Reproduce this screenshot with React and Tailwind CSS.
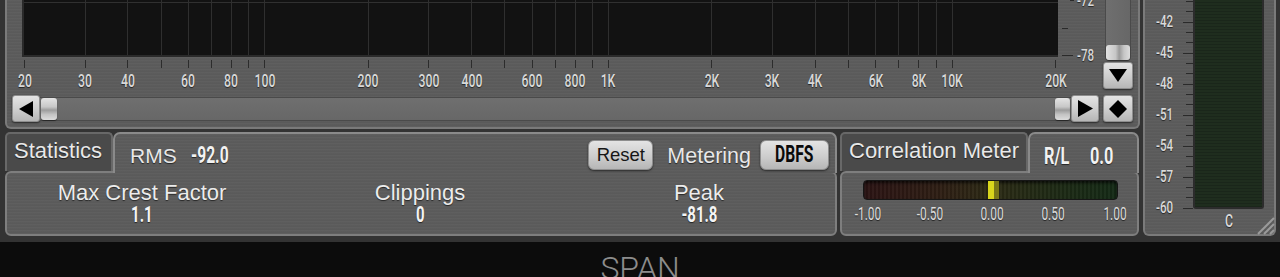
import React from "react";

// frequency axis: [Hz, label]
const FREQS = [
  [20, "20"], [30, "30"], [40, "40"], [50, null], [60, "60"], [70, null], [80, "80"], [90, null],
  [100, "100"], [200, "200"], [300, "300"], [400, "400"], [500, null], [600, "600"], [700, null],
  [800, "800"], [900, null], [1000, "1K"], [2000, "2K"], [3000, "3K"], [4000, "4K"], [5000, null],
  [6000, "6K"], [7000, null], [8000, "8K"], [9000, null], [10000, "10K"], [20000, "20K"],
];
const fx = (f) => 24 + (Math.log10(f / 20) / 3) * 1031;

const DB = ["-42", "-45", "-48", "-51", "-54", "-57", "-60"];

const COND = "inline-block whitespace-nowrap font-['Roboto',sans-serif] scale-x-[0.68]";
const SANS = "font-['Liberation_Sans',Arial,sans-serif]";
const SHADOW = "[text-shadow:0_1px_1px_rgba(0,0,0,0.6)]";
const METAL = "bg-[#5b5b5b] bg-[image:repeating-linear-gradient(180deg,rgba(255,255,255,0.025)_0px,rgba(255,255,255,0.025)_1px,rgba(0,0,0,0.03)_2px,rgba(0,0,0,0)_3px)]";

function Btn({ className = "", children }) {
  return (
    <div
      className={
        "flex items-center justify-center rounded-[3px] border border-[#8e8e8e] bg-[linear-gradient(180deg,#e4e4e4,#cdcdcd_55%,#b6b6b6)] shadow-[0_1px_2px_rgba(0,0,0,0.55)] " +
        className
      }
    >
      {children}
    </div>
  );
}

function Spectrum() {
  return (
    <div className={"flex h-[129px] w-[1135px] rounded-b-[6px] border-x-2 border-b-2 border-[#7a7a7a] pr-[5px] " + METAL}>
      <div className="flex w-[1093px] flex-col">
        {/* graph + dB axis */}
        <div className="flex h-[57px]">
          <div className="relative ml-[15px] h-[57px] w-[1036px] overflow-hidden border-b-2 border-l-2 border-[#2a2a2a] bg-[#121212]">
            <div className="absolute left-0 right-0 top-[2px] h-px bg-[#303030]" />
            {FREQS.filter(([f]) => f > 20 && f < 20000).map(([f]) => (
              <div key={f} className="absolute bottom-0 top-0 w-px bg-[#2f2f2f]" style={{ left: fx(f) - 24 }} />
            ))}
          </div>
          <div className="relative flex-1">
            <div className="absolute left-[12px] top-[0px] h-px w-[4px] bg-[#2a2a2a]" />
            <div className="absolute left-[4px] top-[28px] h-px w-[6px] bg-[#2a2a2a]" />
            <div className="absolute left-[4px] top-[55px] h-px w-[11px] bg-[#2a2a2a]" />
            <span className={COND + " absolute right-[2px] top-[-8px] text-[17px] font-medium leading-[17px] text-[#d8d8d8] " + SHADOW}>-72</span>
            <span className={COND + " absolute right-[2px] top-[47px] text-[17px] font-medium leading-[17px] text-[#d8d8d8] " + SHADOW}>-78</span>
          </div>
        </div>
        {/* frequency axis */}
        <div className="relative h-[38px]">
          {FREQS.map(([f, label]) => (
            <React.Fragment key={f}>
              <div className="absolute top-[3px] h-[8px] w-px bg-[#2c2c2c]" style={{ left: fx(f) - 7 }} />
              {label && (
                <span
                  className={COND + " absolute top-[15px] -translate-x-1/2 text-[18px] font-medium leading-[18px] text-[#d9d9d9] " + SHADOW}
                  style={{ left: fx(f) - 6.5 }}
                >
                  {label}
                </span>
              )}
            </React.Fragment>
          ))}
        </div>
        {/* horizontal scrollbar */}
        <div className="ml-[5px] mr-[1px] flex h-[27px] items-center">
          <Btn className="h-[27px] w-[28px]">
            <svg width="15" height="16" viewBox="0 0 15 16"><polygon points="0,8 14,0 14,16" fill="#000" /></svg>
          </Btn>
          <div className="flex h-[24px] flex-1 items-center justify-between border-y border-[#4a4a4a] bg-[linear-gradient(180deg,#6f6f6f,#676767)] px-[1px]">
            <div className="h-[22px] w-[16px] rounded-[3px] bg-[linear-gradient(180deg,#e4e4e4,#c8c8c8_40%,#9c9c9c_55%,#c4c4c4_75%,#dcdcdc)] shadow-[0_1px_1px_rgba(0,0,0,0.5)]" />
            <div className="h-[22px] w-[15px] rounded-[3px] bg-[linear-gradient(180deg,#e4e4e4,#c8c8c8_40%,#9c9c9c_55%,#c4c4c4_75%,#dcdcdc)] shadow-[0_1px_1px_rgba(0,0,0,0.5)]" />
          </div>
          <Btn className="h-[27px] w-[28px]">
            <svg width="15" height="17" viewBox="0 0 15 17"><polygon points="15,8.5 0,0 0,17" fill="#000" /></svg>
          </Btn>
        </div>
      </div>
      {/* vertical scrollbar */}
      <div className="ml-[3px] flex w-[30px] flex-col">
        <div className="mx-[2px] flex h-[60px] flex-col justify-end rounded-b-[3px] border-x border-[#4a4a4a] bg-[linear-gradient(90deg,#6f6f6f,#676767)]">
          <div className="h-[15px] rounded-[3px] bg-[linear-gradient(90deg,#e2e2e2,#c6c6c6_40%,#9a9a9a_55%,#c6c6c6_75%,#dcdcdc)] shadow-[0_1px_1px_rgba(0,0,0,0.5)]" />
        </div>
        <Btn className="mt-[2px] h-[27px]">
          <svg width="18" height="13" viewBox="0 0 18 13"><polygon points="0,0 18,0 9,13" fill="#000" /></svg>
        </Btn>
        <Btn className="mt-[6px] h-[27px]">
          <svg width="18" height="18" viewBox="0 0 18 18"><polygon points="9,0 18,9 9,18 0,9" fill="#000" /></svg>
        </Btn>
      </div>
    </div>
  );
}

function Statistics() {
  return (
    <div className="flex w-[832px] flex-col">
      <div className="relative z-10 -mb-[2px] flex h-[41px] items-start">
        <div className={"h-[39px] w-[108px] rounded-t-[5px] border-x-2 border-t-2 border-[#686868] bg-[#4a4a4a] pl-[7px] pt-[6px] text-[22px] leading-[22px] text-[#e8e8e8] " + SANS + " " + SHADOW}>
          Statistics
        </div>
        <div className={"flex h-[41px] flex-1 items-start rounded-t-[7px] border-x-2 border-t-2 border-[#8a8a8a] pr-[6px] pt-[6px] " + METAL}>
          <span className={"ml-[15px] mt-[5px] text-[21px] leading-[22px] text-[#e8e8e8] " + SANS + " " + SHADOW}>RMS</span>
          <span className="ml-[14px] mt-[5px] w-[36px]">
            <span className={COND + " origin-left text-[23px] font-bold leading-[22px] text-[#f2f2f2] " + SHADOW}>-92.0</span>
          </span>
          <Btn className="ml-auto h-[30px] w-[65px] rounded-[6px]">
            <span className={"text-[18.5px] leading-[18px] text-[#161616] " + SANS}>Reset</span>
          </Btn>
          <span className={"ml-[14px] mt-[5px] text-[21.5px] leading-[22px] text-[#e8e8e8] " + SANS + " " + SHADOW}>Metering</span>
          <Btn className="ml-[9px] h-[30px] w-[69px] rounded-[6px]">
            <span className={COND + " text-[23px] font-bold leading-[22px] text-[#0a0a0a]"}>DBFS</span>
          </Btn>
        </div>
      </div>
      <div className={"grid h-[65px] grid-cols-[270px_286px_272px] rounded-[6px] border-2 border-[#7e7e7e] pt-[9px] " + METAL}>
        {[
          ["Max Crest Factor", "1.1"],
          ["Clippings", "0"],
          ["Peak", "-81.8"],
        ].map(([label, value]) => (
          <div key={label} className="flex flex-col items-center">
            <span className={"text-[22px] leading-[21px] text-[#ececec] " + SANS + " " + SHADOW}>{label}</span>
            <span className={COND + " mt-[1px] text-[22px] font-bold leading-[22px] text-[#f4f4f4] " + SHADOW}>{value}</span>
          </div>
        ))}
      </div>
    </div>
  );
}

function Correlation() {
  const labels = [
    ["-1.00", 26],
    ["-0.50", 88],
    ["0.00", 150],
    ["0.50", 211],
    ["1.00", 273],
  ];
  return (
    <div className="ml-[3px] flex w-[299px] flex-col">
      <div className="relative z-10 -mb-[2px] flex h-[41px] items-start">
        <div className={"h-[39px] w-[188px] rounded-t-[5px] border-x-2 border-t-2 border-[#686868] bg-[#4a4a4a] pl-[7px] pt-[6px] text-[22px] leading-[22px] text-[#e8e8e8] " + SANS + " " + SHADOW}>
          Correlation Meter
        </div>
        <div className={"flex h-[41px] flex-1 items-start rounded-t-[7px] border-x-2 border-t-2 border-[#8a8a8a] pt-[10px] " + METAL}>
          <span className="ml-[14px] w-[30px]">
            <span className={COND + " origin-left text-[24px] font-bold leading-[24px] text-[#f2f2f2] " + SHADOW}>R/L</span>
          </span>
          <span className="ml-[16px] w-[30px]">
            <span className={COND + " origin-left text-[24px] font-bold leading-[24px] text-[#f2f2f2] " + SHADOW}>0.0</span>
          </span>
        </div>
      </div>
      <div className={"relative h-[65px] rounded-[6px] border-2 border-[#7e7e7e] " + METAL}>
        <div className="relative ml-[21px] mt-[7px] h-[20px] w-[255px] overflow-hidden rounded-[4px] border border-[#161616] bg-[linear-gradient(90deg,#2b1414,#2e1e14_30%,#2c2a15_50%,#1e2a15_75%,#142a16)] shadow-[inset_0_2px_3px_rgba(0,0,0,0.7)]">
          <div className="absolute inset-0 bg-[image:repeating-linear-gradient(90deg,rgba(255,255,255,0.03)_0px,rgba(255,255,255,0.03)_2px,rgba(0,0,0,0.08)_2px,rgba(0,0,0,0.08)_4px)]" />
          <div className="absolute bottom-0 left-[124px] top-0 w-[6px] bg-[#d9d61c]" />
          <div className="absolute bottom-0 left-[130px] top-0 w-[5px] bg-[#7a7818]" />
        </div>
        {labels.map(([t, x]) => (
          <span
            key={t}
            className={COND + " absolute top-[33px] -translate-x-1/2 text-[17.5px] leading-[17px] text-[#dcdcdc] " + SHADOW}
            style={{ left: x }}
          >
            {t}
          </span>
        ))}
      </div>
    </div>
  );
}

function LevelMeter() {
  const ticks = [];
  for (let i = -3; i <= 18; i++) {
    ticks.push({ y: 21.5 + (i * 31) / 3, major: i % 3 === 0 });
  }
  return (
    <div className={"ml-[3px] flex h-[236px] w-[133px] rounded-b-[6px] border-x-2 border-b-2 border-[#7a7a7a] " + METAL}>
      <div className="relative w-[48px]">
        {ticks.map(({ y, major }, i) => (
          <div
            key={i}
            className={"absolute h-px bg-[#2a2a2a] " + (major ? "left-[38px] w-[10px]" : "left-[41px] w-[7px]")}
            style={{ top: Math.round(y) }}
          />
        ))}
        {DB.map((d, i) => (
          <span
            key={d}
            className={COND + " absolute right-[20px] origin-right text-[17px] font-medium leading-[17px] text-[#dadada] " + SHADOW}
            style={{ top: Math.round(21.5 + i * 31) - 9 }}
          >
            {d}
          </span>
        ))}
      </div>
      <div className="flex w-[71px] flex-col items-center">
        <div className="h-[209px] w-full rounded-b-[3px] border-x-2 border-b-2 border-[#2c2c2c] bg-[#1d2a1c] bg-[image:repeating-linear-gradient(180deg,#1f2d1e_0px,#1f2d1e_2px,#1a261a_2px,#1a261a_3px)]" />
        <span className={COND + " mt-[3px] text-[18px] font-medium leading-[18px] text-[#dadada] " + SHADOW}>C</span>
      </div>
      <div className="relative flex-1">
        <svg className="absolute bottom-[-1px] right-[-1px]" width="22" height="20" viewBox="0 0 22 20">
          <line x1="21" y1="3" x2="5" y2="19" stroke="#9a9a9a" strokeWidth="2" />
          <line x1="21" y1="9" x2="11" y2="19" stroke="#9a9a9a" strokeWidth="2" />
          <line x1="21" y1="15" x2="17" y2="19" stroke="#9a9a9a" strokeWidth="2" />
        </svg>
      </div>
    </div>
  );
}

export default function App() {
  return (
    <div className="flex h-[277px] w-[1280px] flex-col overflow-hidden bg-[#0c0c0c]">
      <div className="flex h-[242px] shrink-0 bg-[#333333] pl-[5px]">
        <div className="flex w-[1135px] flex-col">
          <Spectrum />
          <div className="mt-[3px] flex h-[104px]">
            <Statistics />
            <Correlation />
          </div>
        </div>
        <LevelMeter />
      </div>
      <div className="flex flex-1 justify-center pt-[10px]">
        <span className="font-['Roboto',sans-serif] text-[32px] font-light leading-[32px] text-[#8c8c8c]">SPAN</span>
      </div>
    </div>
  );
}
